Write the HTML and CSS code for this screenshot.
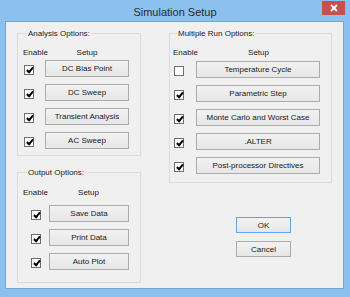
FILE: index.html
```html
<!DOCTYPE html>
<html lang="en">
<head>
    <meta charset="UTF-8">
    <meta name="viewport" content="width=device-width, initial-scale=1.0">
    <title>Simulation Setup</title>
    <link rel="stylesheet" href="styles.css">
</head>
<body>
<div class="window">
    <!-- title bar -->
    <div class="titlebar">
        <span class="title">Simulation Setup</span>
        <span class="close">
            <svg width="8" height="8" viewBox="0 0 8 8"><path d="M1 1L7 7M7 1L1 7" stroke="#fff" stroke-width="1.8"/></svg>
        </span>
    </div>

    <div class="client">
        <!-- left column -->
        <div class="col">
            <div class="group group-analysis">
                <span class="group-title">Analysis Options:</span>
                <div class="head"><span class="head-enable">Enable</span><span class="head-setup">Setup</span></div>
                <div class="opt"><span class="check on"></span><button class="btn">DC Bias Point</button></div>
                <div class="opt"><span class="check on"></span><button class="btn">DC Sweep</button></div>
                <div class="opt"><span class="check on"></span><button class="btn">Transient Analysis</button></div>
                <div class="opt"><span class="check on"></span><button class="btn">AC Sweep</button></div>
            </div>

            <div class="group group-output">
                <span class="group-title">Output Options:</span>
                <div class="head"><span class="head-enable">Enable</span><span class="head-setup">Setup</span></div>
                <div class="opt"><span class="check on"></span><button class="btn">Save Data</button></div>
                <div class="opt"><span class="check on"></span><button class="btn">Print Data</button></div>
                <div class="opt"><span class="check on"></span><button class="btn">Auto Plot</button></div>
            </div>
        </div>

        <!-- right column -->
        <div class="col">
            <div class="group group-multi">
                <span class="group-title">Multiple Run Options:</span>
                <div class="head"><span class="head-enable">Enable</span><span class="head-setup">Setup</span></div>
                <div class="opt"><span class="check"></span><button class="btn">Temperature Cycle</button></div>
                <div class="opt"><span class="check on"></span><button class="btn">Parametric Step</button></div>
                <div class="opt"><span class="check on"></span><button class="btn">Monte Carlo and Worst Case</button></div>
                <div class="opt"><span class="check on"></span><button class="btn">.ALTER</button></div>
                <div class="opt"><span class="check on"></span><button class="btn">Post-processor Directives</button></div>
            </div>

            <div class="actions">
                <button class="btn btn-default">OK</button>
                <button class="btn">Cancel</button>
            </div>
        </div>
    </div>
</div>
</body>
</html>
```

FILE: styles.css
```css
*{
    box-sizing: border-box;
    margin:0;
    padding:0;
}
body{
    width:350px;
    height:297px;
    overflow:hidden;
    background:#8cc0ee;
    font-family: "Liberation Sans", Arial, sans-serif;
    font-size:8px;
    line-height:11px;
    color:#1a1a1a;
}
.window{
    height:297px;
    display:flex;
    flex-direction:column;
}
.titlebar{
    height:21px;
    display:flex;
    justify-content:center;
    align-items:center;
    position:relative;
}
.title{
    font-size:11px;
    color:#2b2b2b;
    margin-top:3px;
}
.close{
    position:absolute;
    right:5px;
    top:1px;
    width:23px;
    height:14px;
    background:#c75050;
    display:flex;
    justify-content:center;
    align-items:center;
}
.client{
    flex:1;
    margin:0 6px 8px 5px;
    background:#f0f0f0;
    border:1px solid #79a6d2;
    padding:11px 0 0 11px;
    display:grid;
    grid-template-columns:124px 163px;
    column-gap:28px;
    align-items:start;
}
.group{
    border:1px solid #dcdcdc;
}
.group-title{
    display:block;
    width:max-content;
    margin:-6px 0 0 4px;
    padding:0 1px;
    background:#f0f0f0;
}
.head{
    display:flex;
    margin-top:8px;
}
.head-enable{
    width:22px;
}
.head-setup{
    flex:1;
    text-align:center;
}
.opt{
    display:flex;
    align-items:center;
    margin-top:7px;
}
.head + .opt{
    margin-top:2px;
}
.check{
    width:10px;
    height:10px;
    border:1px solid #707070;
    background:#fff;
    position:relative;
    top:1px;
}
.check.on::after{
    content:"";
    position:absolute;
    left:2.5px;
    top:0;
    width:2px;
    height:5px;
    border:solid #000;
    border-width:0 2px 2px 0;
    transform:rotate(40deg);
}
.btn{
    height:17px;
    border:1px solid #acacac;
    background:linear-gradient(#f2f2f2, #e6e6e6);
    font-family:inherit;
    font-size:8px;
    color:#1a1a1a;
    text-align:center;
}
.btn-default{
    border-color:#5ea7f0;
}

/* analysis box */
.group-analysis{
    height:123px;
    padding:0 11px 0 5px;
}
.group-analysis .check{
    margin-left:1px;
    margin-right:11px;
}
.group-analysis .btn{
    flex:1;
}

/* output box */
.group-output{
    margin-top:16px;
    height:111px;
    padding:0 11px 0 5px;
}
.group-output .head{
    margin-top:9px;
}
.group-output .head-setup{
    padding-left:3px;
}
.group-output .head + .opt{
    margin-top:7px;
}
.group-output .check{
    margin-left:8px;
    margin-right:8px;
}
.group-output .btn{
    flex:1;
}

/* multiple run box */
.group-multi{
    height:150px;
    padding:0 11px 0 3px;
}
.group-multi .head-enable{
    width:24px;
}
.group-multi .head + .opt{
    margin-top:3px;
}
.group-multi .check{
    margin-left:1px;
    margin-right:12px;
}
.group-multi .btn{
    flex:1;
}

.actions{
    margin:34px 0 0 67px;
    display:flex;
    flex-direction:column;
    gap:8px;
    width:55px;
}
.actions .btn{
    height:16px;
}
```
